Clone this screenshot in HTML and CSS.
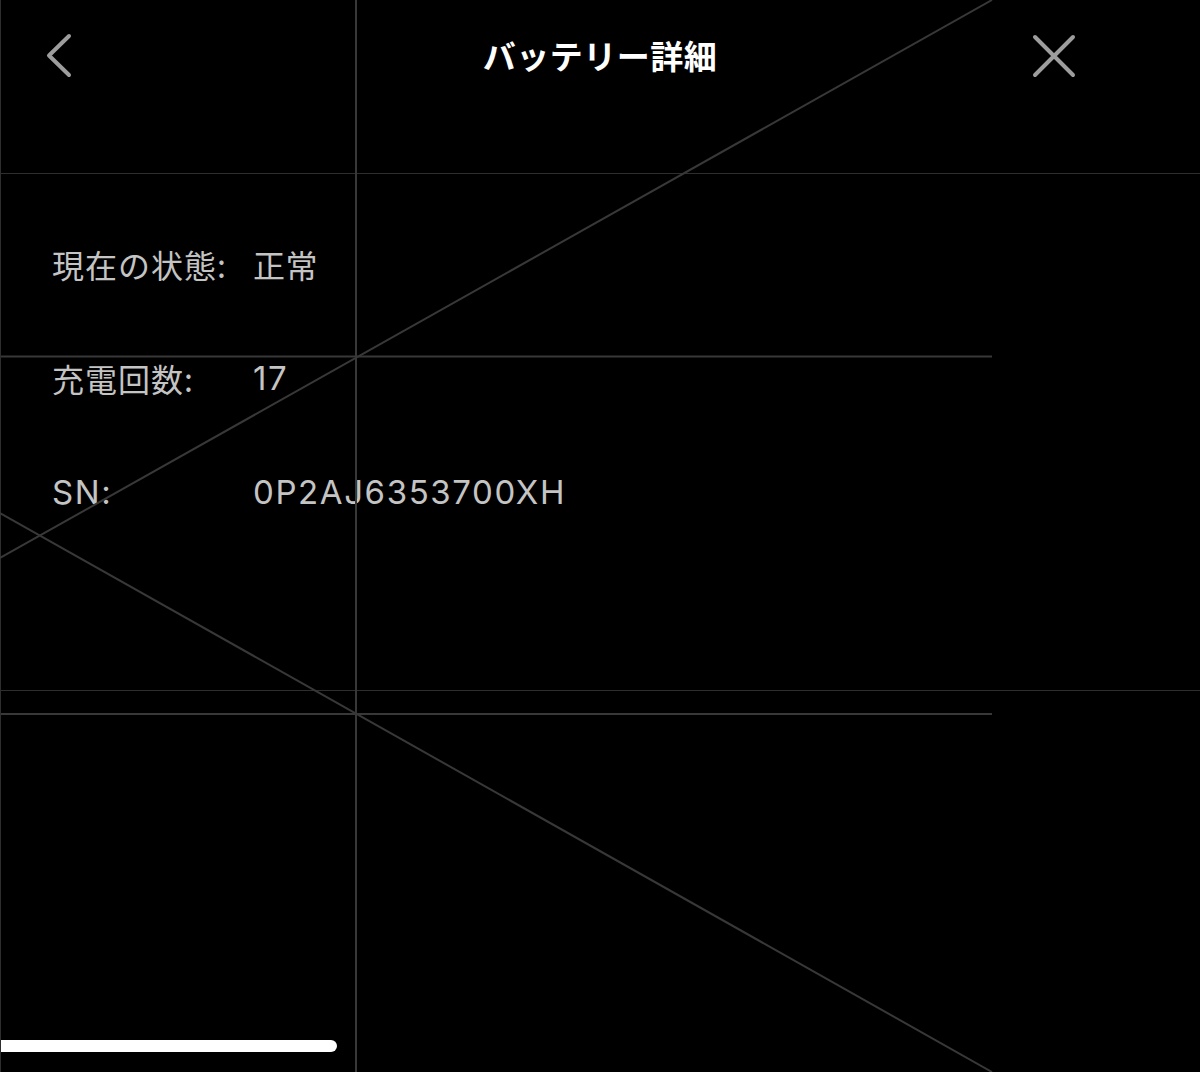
FILE: index.html
```html
<!DOCTYPE html>
<html lang="ja">
<head>
<meta charset="utf-8">
<title>バッテリー詳細</title>
<link rel="stylesheet" href="styles.css">
</head>
<body>
<div class="screen">
  <header class="nav">
    <button class="nav-btn back" aria-label="戻る">
      <svg width="40" height="50" viewBox="0 0 40 50"><polyline points="31,5 11,24.5 31,44" fill="none" stroke="#9d9d9d" stroke-width="4" stroke-linecap="round" stroke-linejoin="round"/></svg>
    </button>
    <h1 class="title">バッテリー詳細</h1>
    <button class="nav-btn close" aria-label="閉じる">
      <svg width="50" height="50" viewBox="0 0 50 50"><path d="M6 6 L44 44 M44 6 L6 44" fill="none" stroke="#9d9d9d" stroke-width="4" stroke-linecap="round"/></svg>
    </button>
  </header>

  <main class="details">
    <div class="row"><span class="label">現在の状態:</span><span class="value">正常</span></div>
    <div class="row"><span class="label">充電回数:</span><span class="value num">17</span></div>
    <div class="row"><span class="label num">SN:</span><span class="value num">0P2AJ6353700XH</span></div>
  </main>

  <div class="home-indicator"></div>

  <svg class="guides" width="1200" height="1072" viewBox="0 0 1200 1072">
    <line x1="0" y1="173.5" x2="1200" y2="173.5" class="thin"/>
    <line x1="0" y1="690.5" x2="1200" y2="690.5" class="thin"/>
    <line x1="0" y1="356.5" x2="992" y2="356.5" class="thick"/>
    <line x1="0" y1="714" x2="992" y2="714" class="thick"/>
    <line x1="356" y1="0" x2="356" y2="1072" class="thick"/>
    <line x1="0.5" y1="0" x2="0.5" y2="1072" class="thin"/>
    <line x1="0" y1="558" x2="992" y2="0" class="thick"/>
    <line x1="0" y1="513" x2="992" y2="1072" class="thick"/>
  </svg>
</div>
</body>
</html>
```

FILE: styles.css
```css
* { box-sizing: border-box; }

html, body {
  margin: 0;
  padding: 0;
  background: #000;
}

body {
  font-family: "Noto Sans", "Noto Sans CJK JP", sans-serif;
  color: #c4c4c4;
}

.screen {
  position: relative;
  width: 1200px;
  height: 1072px;
  overflow: hidden;
  background: #000;
  display: flex;
  flex-direction: column;
}

.nav {
  height: 112px;
  display: flex;
  align-items: center;
  justify-content: space-between;
  padding: 0 121px 0 38px;
}

.nav-btn {
  background: none;
  border: 0;
  padding: 0;
  display: flex;
  align-items: center;
  justify-content: center;
  cursor: pointer;
}

.title {
  margin: 0;
  font-family: "Noto Sans CJK JP", sans-serif;
  font-size: 33px;
  font-weight: 700;
  color: #fff;
  letter-spacing: 0.5px;
  position: absolute;
  left: 0;
  right: 0;
  top: 31px;
  text-align: center;
  pointer-events: none;
  line-height: 48px;
}

.details {
  padding: 128px 0 0 52px;
  display: flex;
  flex-direction: column;
  gap: 66px;
}

.row {
  display: flex;
  align-items: center;
  height: 48px;
  font-size: 32px;
  line-height: 48px;
  font-family: "Noto Sans CJK JP", sans-serif;
}

.label {
  width: 201px;
  flex: none;
  letter-spacing: 1px;
}

.value {
  letter-spacing: 0.6px;
}

.num {
  font-family: "Inter", "Noto Sans", sans-serif;
  font-size: 33px;
  letter-spacing: 1.6px;
}

.home-indicator {
  margin-top: auto;
  margin-bottom: 20px;
  width: 337px;
  height: 12px;
  background: #fff;
  border-radius: 0 6px 6px 0;
}

.guides {
  position: absolute;
  left: 0;
  top: 0;
  pointer-events: none;
}

.guides line { stroke-linecap: butt; }
.guides .thin { stroke: #2e2e2e; stroke-width: 1; }
.guides .thick { stroke: #383838; stroke-width: 2; }
```
